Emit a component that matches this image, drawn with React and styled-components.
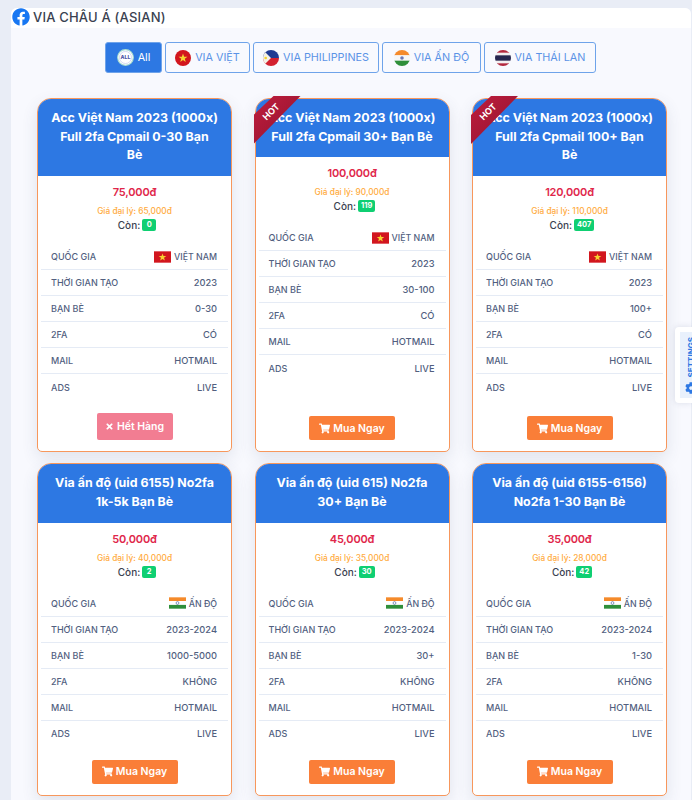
import React from "react";
import styled, { createGlobalStyle } from "styled-components";
import { FaFacebook, FaShoppingCart, FaTimes, FaCog } from "react-icons/fa";

const GlobalStyle = createGlobalStyle`
  * { box-sizing: border-box; }
  html, body { margin: 0; height: 800px; overflow: hidden; background: #e9edf6; }
  body { font-family: Inter, "Liberation Sans", sans-serif; }
`;

const VN = () => (
  <svg viewBox="0 0 18 12" width="17" height="12">
    <rect width="18" height="12" fill="#d2161e" />
    <polygon points="9,2.2 10,5 13,5 10.6,6.9 11.5,9.8 9,8 6.5,9.8 7.4,6.9 5,5 8,5" fill="#f6d330" />
  </svg>
);

const IN = () => (
  <svg viewBox="0 0 18 12" width="17" height="12">
    <rect width="18" height="4" fill="#f58a2a" />
    <rect y="4" width="18" height="4" fill="#fff" />
    <rect y="8" width="18" height="4" fill="#2f8f3a" />
    <circle cx="9" cy="6" r="1.5" fill="none" stroke="#2d4a8f" strokeWidth="0.6" />
  </svg>
);

const TabFlag = ({ type }) => {
  if (type === "all")
    return (
      <svg viewBox="0 0 18 18" width="17" height="17">
        <circle cx="9" cy="9" r="8.3" fill="#fff" stroke="#a9dcd0" strokeWidth="1.2" />
        <circle cx="9" cy="9" r="6.4" fill="none" stroke="#b6c0e6" strokeWidth="0.6" />
        <text x="9" y="11" textAnchor="middle" fontSize="5.5" fontWeight="800" fill="#4f58a8">ALL</text>
      </svg>
    );
  if (type === "vn")
    return (
      <svg viewBox="0 0 18 18" width="16" height="16">
        <circle cx="9" cy="9" r="9" fill="#d2161e" />
        <polygon points="9,4 10.3,7.6 14,7.6 11,9.9 12.1,13.5 9,11.3 5.9,13.5 7,9.9 4,7.6 7.7,7.6" fill="#f6d330" />
      </svg>
    );
  if (type === "ph")
    return (
      <svg viewBox="0 0 18 18" width="16" height="16">
        <clipPath id="ph"><circle cx="9" cy="9" r="9" /></clipPath>
        <g clipPath="url(#ph)">
          <rect width="18" height="9" fill="#1f3a93" />
          <rect y="9" width="18" height="9" fill="#d3202f" />
          <polygon points="0,0 9,9 0,18" fill="#f4f1e6" />
          <circle cx="3" cy="9" r="1.5" fill="#f6d330" />
        </g>
      </svg>
    );
  if (type === "in")
    return (
      <svg viewBox="0 0 18 18" width="16" height="16">
        <clipPath id="in"><circle cx="9" cy="9" r="9" /></clipPath>
        <g clipPath="url(#in)">
          <rect width="18" height="6" fill="#f58a2a" />
          <rect y="6" width="18" height="6" fill="#f6f6f6" />
          <rect y="12" width="18" height="6" fill="#2f8f3a" />
          <circle cx="9" cy="9" r="2" fill="#6b78b5" />
        </g>
      </svg>
    );
  return (
    <svg viewBox="0 0 18 18" width="16" height="16">
      <clipPath id="th"><circle cx="9" cy="9" r="9" /></clipPath>
      <g clipPath="url(#th)">
        <rect width="18" height="18" fill="#f2eef0" />
        <rect width="18" height="3" fill="#b3283e" />
        <rect y="15" width="18" height="3" fill="#b3283e" />
        <rect y="6" width="18" height="6" fill="#26264f" />
      </g>
    </svg>
  );
};

const tabs = [
  { id: "all", label: "All", width: 57, active: true },
  { id: "vn", label: "VIA VIỆT", width: 85 },
  { id: "ph", label: "VIA PHILIPPINES", width: 126 },
  { id: "in", label: "VIA ẤN ĐỘ", width: 99 },
  { id: "th", label: "VIA THÁI LAN", width: 112 },
];

const products = [
  { title: ["Acc Việt Nam 2023 (1000x)", "Full 2fa Cpmail 0-30 Bạn", "Bè"], price: "75,000đ", agent: "65,000đ", stock: 0, flag: "vn", country: "VIỆT NAM", year: "2023", friends: "0-30", fa: "CÓ", soldOut: true },
  { title: ["Acc Việt Nam 2023 (1000x)", "Full 2fa Cpmail 30+ Bạn Bè"], price: "100,000đ", agent: "90,000đ", stock: 119, flag: "vn", country: "VIỆT NAM", year: "2023", friends: "30-100", fa: "CÓ", hot: true },
  { title: ["Acc Việt Nam 2023 (1000x)", "Full 2fa Cpmail 100+ Bạn", "Bè"], price: "120,000đ", agent: "110,000đ", stock: 407, flag: "vn", country: "VIỆT NAM", year: "2023", friends: "100+", fa: "CÓ", hot: true },
  { title: ["Via ấn độ (uid 6155) No2fa", "1k-5k Bạn Bè"], price: "50,000đ", agent: "40,000đ", stock: 2, flag: "in", country: "ẤN ĐỘ", year: "2023-2024", friends: "1000-5000", fa: "KHÔNG" },
  { title: ["Via ấn độ (uid 615) No2fa", "30+ Bạn Bè"], price: "45,000đ", agent: "35,000đ", stock: 30, flag: "in", country: "ẤN ĐỘ", year: "2023-2024", friends: "30+", fa: "KHÔNG" },
  { title: ["Via ấn độ (uid 6155-6156)", "No2fa 1-30 Bạn Bè"], price: "35,000đ", agent: "28,000đ", stock: 42, flag: "in", country: "ẤN ĐỘ", year: "2023-2024", friends: "1-30", fa: "KHÔNG" },
];

const ProductCard = ({ item }) => (
  <Card>
    {item.hot && (
      <Ribbon>
        <span>HOT</span>
      </Ribbon>
    )}
    <CardTitle>
      {item.title.map((line, i) => (
        <div key={i}>{line}</div>
      ))}
    </CardTitle>
    <PriceBox>
      <Price>{item.price}</Price>
      <Agent>Giá đại lý: {item.agent}</Agent>
      <Stock>
        Còn: <StockBadge>{item.stock}</StockBadge>
      </Stock>
    </PriceBox>
    <Specs>
      <Spec>
        <SpecLabel>QUỐC GIA</SpecLabel>
        <Country>
          {item.flag === "vn" ? <VN /> : <IN />}
          {item.country}
        </Country>
      </Spec>
      <Spec>
        <SpecLabel>THỜI GIAN TẠO</SpecLabel>
        <span>{item.year}</span>
      </Spec>
      <Spec>
        <SpecLabel>BẠN BÈ</SpecLabel>
        <span>{item.friends}</span>
      </Spec>
      <Spec>
        <SpecLabel>2FA</SpecLabel>
        <span>{item.fa}</span>
      </Spec>
      <Spec>
        <SpecLabel>MAIL</SpecLabel>
        <span>HOTMAIL</span>
      </Spec>
      <Spec>
        <SpecLabel>ADS</SpecLabel>
        <span>LIVE</span>
      </Spec>
    </Specs>
    {item.soldOut ? (
      <BuyButton $soldOut>
        <FaTimes size={9} /> Hết Hàng
      </BuyButton>
    ) : (
      <BuyButton>
        <FaShoppingCart size={11} /> Mua Ngay
      </BuyButton>
    )}
  </Card>
);

export default function App() {
  return (
    <>
      <GlobalStyle />
      <Panel>
        <PanelHead>
          <FbIcon><FaFacebook size={18} color="#1877f2" /></FbIcon>
          VIA CHÂU Á (ASIAN)
        </PanelHead>
        <Tabs>
          {tabs.map((t) => (
            <Tab key={t.id} $active={t.active} $width={t.width}>
              <TabFlag type={t.id} />
              {t.label}
            </Tab>
          ))}
        </Tabs>
        <Grid>
          {products.map((p, i) => (
            <ProductCard key={i} item={p} />
          ))}
        </Grid>
      </Panel>
      <SettingsTab>
        <SettingsInner>
          <span>SETTINGS</span>
          <FaCog size={12} color="#2d78e3" />
        </SettingsInner>
      </SettingsTab>
    </>
  );
}

const Panel = styled.div`
  margin: 8px 1px 0 11px;
  height: 792px;
  background: #f8f9fe;
  border-radius: 6px 6px 0 0;
  overflow: hidden;
`;

const PanelHead = styled.div`
  height: 20px;
  padding: 0 0 2px 1px;
  background: #fff;
  display: flex;
  align-items: center;
  gap: 3px;
  font-size: 13px;
  letter-spacing: 0.2px;
  font-weight: 500;
  color: #3a4150;
`;

const FbIcon = styled.span`
  display: flex;
  width: 18px;
  height: 18px;
`;

const Tabs = styled.div`
  display: flex;
  gap: 3px;
  margin: 14px 0 25px 94px;
`;

const Tab = styled.div`
  width: ${(props) => props.$width}px;
  height: 31px;
  display: flex;
  align-items: center;
  justify-content: center;
  gap: 4px;
  white-space: nowrap;
  font-size: 10.8px;
  border-radius: 3px;
  border: 1px solid #6ea3ea;
  background: ${(props) => (props.$active ? "#2d78e3" : "transparent")};
  color: ${(props) => (props.$active ? "#fff" : "#5b93e6")};
`;

const Grid = styled.div`
  display: grid;
  grid-template-columns: repeat(3, 195px);
  column-gap: 22.5px;
  row-gap: 11px;
  margin-left: 26px;
`;

const Card = styled.div`
  position: relative;
  display: flex;
  flex-direction: column;
  background: #fff;
  border: 1px solid #f7975c;
  border-radius: 14px 14px 5px 5px;
  box-shadow: 0 6px 16px rgba(60, 70, 110, 0.12);
  padding-bottom: 11px;
`;

const Ribbon = styled.div`
  position: absolute;
  top: -3px;
  left: -2px;
  width: 47px;
  height: 48px;
  background: linear-gradient(135deg, #c01c3c, #8f1430);
  clip-path: polygon(20px 0, 47px 0, 0 48px, 0 19px);
  z-index: 2;

  span {
    position: absolute;
    top: 10px;
    left: 4px;
    width: 26px;
    text-align: center;
    transform: rotate(-45deg);
    color: #fff;
    font-size: 9px;
    font-weight: 700;
  }
`;

const CardTitle = styled.div`
  background: #2d78e3;
  color: #fff;
  border-radius: 13px 13px 0 0;
  padding: 10px 0 11px;
  text-align: center;
  white-space: nowrap;
  font-size: 12.4px;
  line-height: 18.7px;
  font-weight: 700;
`;

const PriceBox = styled.div`
  display: flex;
  flex-direction: column;
  align-items: center;
  padding-top: 9px;
`;

const Price = styled.div`
  color: #e0264a;
  font-size: 11px;
  letter-spacing: -0.2px;
  line-height: 15px;
  font-weight: 600;
`;

const Agent = styled.div`
  margin-top: 5px;
  color: #ffab40;
  font-size: 8.3px;
  font-weight: 500;
  line-height: 12px;
`;

const Stock = styled.div`
  margin-top: 1px;
  padding-left: 5px;
  display: flex;
  align-items: center;
  gap: 2px;
  color: #3a4150;
  font-size: 10px;
  font-weight: 500;
  line-height: 14px;
`;

const StockBadge = styled.span`
  background: #0fcf72;
  color: #fff;
  font-size: 7.5px;
  font-weight: 700;
  min-width: 14px;
  padding: 0 3px;
  height: 12px;
  line-height: 12px;
  border-radius: 2px;
  text-align: center;
`;

const Specs = styled.div`
  margin: 12px 3px 0;
  padding-bottom: 13px;
`;

const Spec = styled.div`
  display: flex;
  justify-content: space-between;
  align-items: center;
  height: 26px;
  padding: 0 11px 0 10px;
  font-size: 9.3px;
  font-weight: 500;
  color: #525f7f;
  border-bottom: 1px solid #e5ebf5;
  &:last-child { border-bottom: 0; }
`;

const SpecLabel = styled.span`
  font-size: 9px;
`;

const Country = styled.span`
  display: flex;
  align-items: center;
  gap: 3px;
  font-size: 8.8px;
`;

const BuyButton = styled.div`
  margin: auto auto 0;
  display: flex;
  align-items: center;
  justify-content: center;
  gap: 3px;
  width: ${(props) => (props.$soldOut ? "76px" : "86px")};
  height: ${(props) => (props.$soldOut ? "27px" : "24px")};
  border-radius: 2px;
  background: ${(props) => (props.$soldOut ? "#f27d92" : "#fa7e38")};
  color: #fff;
  font-size: 10.5px;
  font-weight: 600;
`;

const SettingsTab = styled.div`
  position: absolute;
  top: 327px;
  right: 0;
  width: 17px;
  height: 76px;
  padding: 5px 0 0 5px;
  background: #fff;
  border-radius: 4px 0 0 4px;
  box-shadow: 0 0 6px rgba(60, 70, 110, 0.15);
  overflow: hidden;
`;

const SettingsInner = styled.div`
  height: 66px;
  width: 20px;
  padding: 5px 0 0 1px;
  background: #e9f1fc;
  display: flex;
  flex-direction: column;
  align-items: center;
  gap: 5px;

  span {
    writing-mode: vertical-rl;
    transform: rotate(180deg);
    color: #2d78e3;
    font-size: 8px;
    font-weight: 700;
  }
`;
